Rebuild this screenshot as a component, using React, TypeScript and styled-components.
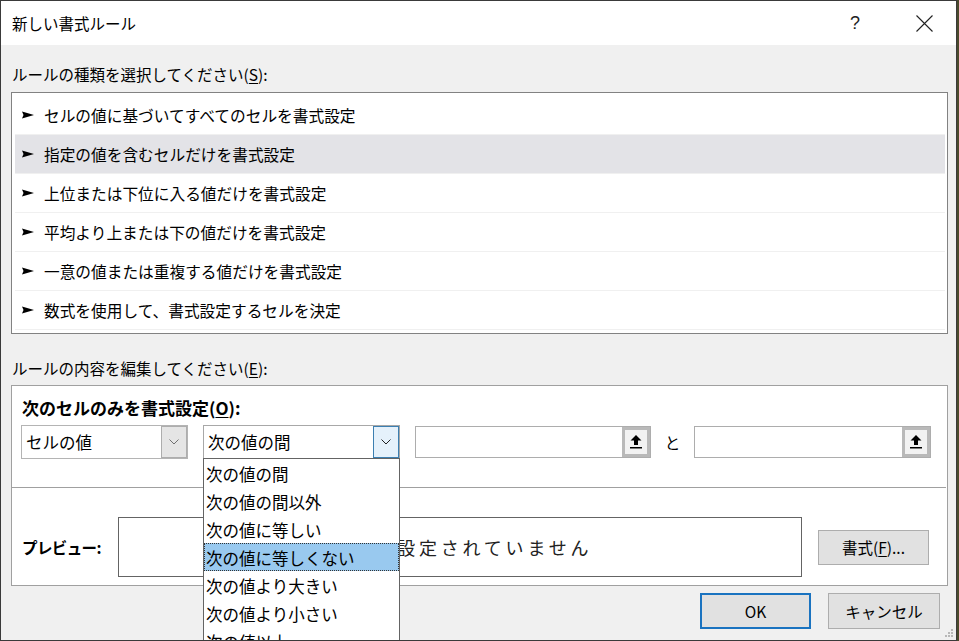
import React from "react";
import styled, { createGlobalStyle } from "styled-components";

const FONT = `"Noto Sans CJK JP", "Noto Sans", sans-serif`;

const Global = createGlobalStyle`
  html, body { margin: 0; padding: 0; background: #4b4a2c; overflow: hidden; }
  body { font-family: ${FONT}; color: #000; }
  * { box-sizing: border-box; }
`;

const Window = styled.div`
  position: relative;
  width: 957px;
  height: 641px;
  border: 1px solid #3a3a3a;
  background: #f0f0f0;
  display: flex;
  flex-direction: column;
  overflow: hidden;
`;

const TitleBar = styled.div`
  height: 44px;
  background: #fff;
  display: flex;
  align-items: center;
  padding-left: 11px;
  padding-right: 9px;
  flex-shrink: 0;
`;

const Title = styled.div`
  font-size: 15.5px;
  flex: 1;
  line-height: 20px;
  margin-top: -1px;
`;

const CaptionButton = styled.div<{ $mr?: number }>`
  width: 46px;
  height: 44px;
  margin-right: ${(p) => p.$mr ?? 0}px;
  display: flex;
  align-items: center;
  justify-content: center;
  font-family: "Liberation Sans", sans-serif;
  font-size: 18px;
  font-weight: 300;
  color: #222;
`;

const Body = styled.div`
  flex: 1;
  display: flex;
  flex-direction: column;
  padding-left: 10px;
`;

const SectionLabel = styled.div<{ $mt: number }>`
  margin-top: ${(p) => p.$mt}px;
  height: 20px;
  line-height: 20px;
  font-size: 15.5px;
  padding-left: 1px;
`;

const Key = styled.span`
  text-decoration: underline;
  text-underline-offset: 2px;
  text-decoration-thickness: 1px;
`;

const RuleList = styled.div`
  margin-top: 8px;
  width: 937px;
  height: 242px;
  border: 1px solid #828282;
  background: #fff;
  padding: 3px 2px 2px 3px;
  display: flex;
  flex-direction: column;
`;

const RuleRow = styled.div<{ $selected?: boolean }>`
  height: 39px;
  flex-shrink: 0;
  display: flex;
  align-items: center;
  gap: 10px;
  padding-left: 7px;
  font-size: 15.7px;
  background: ${(p) => (p.$selected ? "#e3e3e7" : "#fff")};
  border-bottom: 1px solid #f0f0f0;
`;

const EditBox = styled.div`
  margin-top: 7px;
  width: 937px;
  height: 201px;
  border: 1px solid #a0a0a0;
  background: #fff;
  padding: 12px 0 8px 0;
  display: flex;
  flex-direction: column;
`;

const BoldLabel = styled.div`
  height: 20px;
  line-height: 20px;
  font-size: 17px;
  font-weight: 700;
  padding-left: 10px;
`;

const ControlsRow = styled.div`
  margin-top: 7px;
  height: 34px;
  display: flex;
  align-items: center;
  padding-left: 9px;
`;

const Combo = styled.div<{ $w: number; $focus?: boolean }>`
  position: relative;
  width: ${(p) => p.$w}px;
  height: 34px;
  border: 1px solid ${(p) => (p.$focus ? "#a8a8a8" : "#b4b4b4")};
  background: #fff;
  display: flex;
  align-items: center;
  margin-right: 15px;
`;

const ComboText = styled.div`
  flex: 1;
  padding-left: 4px;
  font-size: 16.5px;
  line-height: 20px;
`;

const ComboButton = styled.div<{ $focus?: boolean }>`
  width: 26px;
  height: 32px;
  display: flex;
  align-items: center;
  justify-content: center;
  background: ${(p) => (p.$focus ? "#e5f1fb" : "#e5e5e5")};
  border: 1px solid ${(p) => (p.$focus ? "#3c7fb1" : "#adadad")};
`;

const RefInput = styled.div<{ $w: number }>`
  width: ${(p) => p.$w}px;
  height: 32px;
  border: 1px solid #adadad;
  background: #fff;
  display: flex;
  justify-content: flex-end;
`;

const RefButton = styled.div`
  width: 28px;
  height: 30px;
  border: 3px solid #b9b9b9;
  background: #f2f2f2;
  display: flex;
  align-items: center;
  justify-content: center;
`;

const AndText = styled.div`
  width: 43px;
  text-align: center;
  font-size: 15.5px;
  line-height: 20px;
`;

const Separator = styled.div`
  margin-top: 28px;
  height: 1px;
  background: #a0a0a0;
  margin-right: 1px;
`;

const PreviewRow = styled.div`
  margin-top: 29px;
  height: 60px;
  display: flex;
  align-items: center;
  padding-left: 10px;
`;

const PreviewLabel = styled.div`
  width: 96px;
  font-size: 15.5px;
  font-weight: 700;
  letter-spacing: -0.6px;
  line-height: 20px;
`;

const PreviewBox = styled.div`
  width: 684px;
  height: 60px;
  border: 1px solid #646464;
  display: flex;
  align-items: center;
  justify-content: center;
  font-size: 18px;
  letter-spacing: 3.8px;
  padding-left: 4px;
  color: #222;
  margin-right: 16px;
`;

const PushButton = styled.div<{ $w: number; $h: number; $default?: boolean }>`
  width: ${(p) => p.$w}px;
  height: ${(p) => p.$h}px;
  background: #e1e1e1;
  border: ${(p) => (p.$default ? "2px solid #1a73c0" : "1px solid #adadad")};
  display: flex;
  align-items: center;
  justify-content: center;
  font-size: 15.5px;
  line-height: 20px;
`;

const Footer = styled.div`
  margin-top: 7px;
  display: flex;
  justify-content: flex-end;
  gap: 17px;
  padding-right: 16px;
`;

const DropList = styled.div`
  position: absolute;
  left: -1px;
  top: 32px;
  width: 197px;
  background: #fff;
  border: 1px solid #646464;
  z-index: 5;
  display: flex;
  flex-direction: column;
`;

const DropItem = styled.div<{ $selected?: boolean }>`
  height: 28px;
  flex-shrink: 0;
  display: flex;
  align-items: center;
  padding-left: 2px;
  padding-top: 2px;
  font-size: 16.5px;
  background: ${(p) => (p.$selected ? "#99c9ef" : "#fff")};
  outline: ${(p) => (p.$selected ? "1px dotted #333" : "none")};
  outline-offset: -1px;
`;

const Grip = styled.svg`
  position: absolute;
  right: 2px;
  bottom: 2px;
`;

const Chevron = ({ color }: { color: string }) => (
  <svg width="10" height="6" viewBox="0 0 10 6">
    <polyline points="0.5,0.5 5,5 9.5,0.5" fill="none" stroke={color} strokeWidth="1" />
  </svg>
);

const UpArrow = () => (
  <svg width="12" height="14" viewBox="0 0 12 14">
    <polygon points="6,0 11.5,5.5 8,5.5 8,10 4,10 4,5.5 0.5,5.5" fill="#000" />
    <rect x="0" y="12" width="12" height="1.5" fill="#000" />
  </svg>
);

const Pointer = () => (
  <svg width="12" height="8" viewBox="0 0 12 8">
    <polygon points="0,0.5 12,4 0,7.5 1.5,4" fill="#000" />
  </svg>
);

const rules = [
  "セルの値に基づいてすべてのセルを書式設定",
  "指定の値を含むセルだけを書式設定",
  "上位または下位に入る値だけを書式設定",
  "平均より上または下の値だけを書式設定",
  "一意の値または重複する値だけを書式設定",
  "数式を使用して、書式設定するセルを決定",
];

const options = [
  "次の値の間",
  "次の値の間以外",
  "次の値に等しい",
  "次の値に等しくない",
  "次の値より大きい",
  "次の値より小さい",
  "次の値以上",
  "次の値以下",
];

export default function App() {
  return (
    <>
      <Global />
      <Window>
        <TitleBar>
          <Title>新しい書式ルール</Title>
          <CaptionButton $mr={23}>?</CaptionButton>
          <CaptionButton>
            <svg width="17" height="17" viewBox="0 0 17 17">
              <path d="M0.5 0.5 L16.5 16.5 M16.5 0.5 L0.5 16.5" stroke="#222" strokeWidth="1.1" />
            </svg>
          </CaptionButton>
        </TitleBar>
        <Body>
          <SectionLabel $mt={19}>
            ルールの種類を選択してください(<Key>S</Key>):
          </SectionLabel>
          <RuleList>
            {rules.map((r, i) => (
              <RuleRow key={r} $selected={i === 1}>
                <Pointer />
                <span>{r}</span>
              </RuleRow>
            ))}
          </RuleList>
          <SectionLabel $mt={24}>
            ルールの内容を編集してください(<Key>E</Key>):
          </SectionLabel>
          <EditBox>
            <BoldLabel>
              次のセルのみを書式設定(<Key>O</Key>):
            </BoldLabel>
            <ControlsRow>
              <Combo $w={167}>
                <ComboText>セルの値</ComboText>
                <ComboButton>
                  <Chevron color="#707070" />
                </ComboButton>
              </Combo>
              <Combo $w={197} $focus>
                <ComboText>次の値の間</ComboText>
                <ComboButton $focus>
                  <Chevron color="#222" />
                </ComboButton>
                <DropList>
                  {options.map((o, i) => (
                    <DropItem key={o} $selected={i === 3}>
                      {o}
                    </DropItem>
                  ))}
                </DropList>
              </Combo>
              <RefInput $w={236}>
                <RefButton>
                  <UpArrow />
                </RefButton>
              </RefInput>
              <AndText>と</AndText>
              <RefInput $w={237}>
                <RefButton>
                  <UpArrow />
                </RefButton>
              </RefInput>
            </ControlsRow>
            <Separator />
            <PreviewRow>
              <PreviewLabel>プレビュー:</PreviewLabel>
              <PreviewBox>書式が設定されていません</PreviewBox>
              <PushButton $w={111} $h={35}>
                書式(<Key>F</Key>)...
              </PushButton>
            </PreviewRow>
          </EditBox>
          <Footer>
            <PushButton $w={111} $h={36} $default>
              OK
            </PushButton>
            <PushButton $w={112} $h={36}>
              キャンセル
            </PushButton>
          </Footer>
        </Body>
        <Grip width="10" height="10" viewBox="0 0 10 10">
          {[
            [7, 1],
            [4, 4],
            [7, 4],
            [1, 7],
            [4, 7],
            [7, 7],
          ].map(([x, y]) => (
            <rect key={`${x}-${y}`} x={x} y={y} width="2" height="2" fill="#b8b8b8" />
          ))}
        </Grip>
      </Window>
    </>
  );
}
